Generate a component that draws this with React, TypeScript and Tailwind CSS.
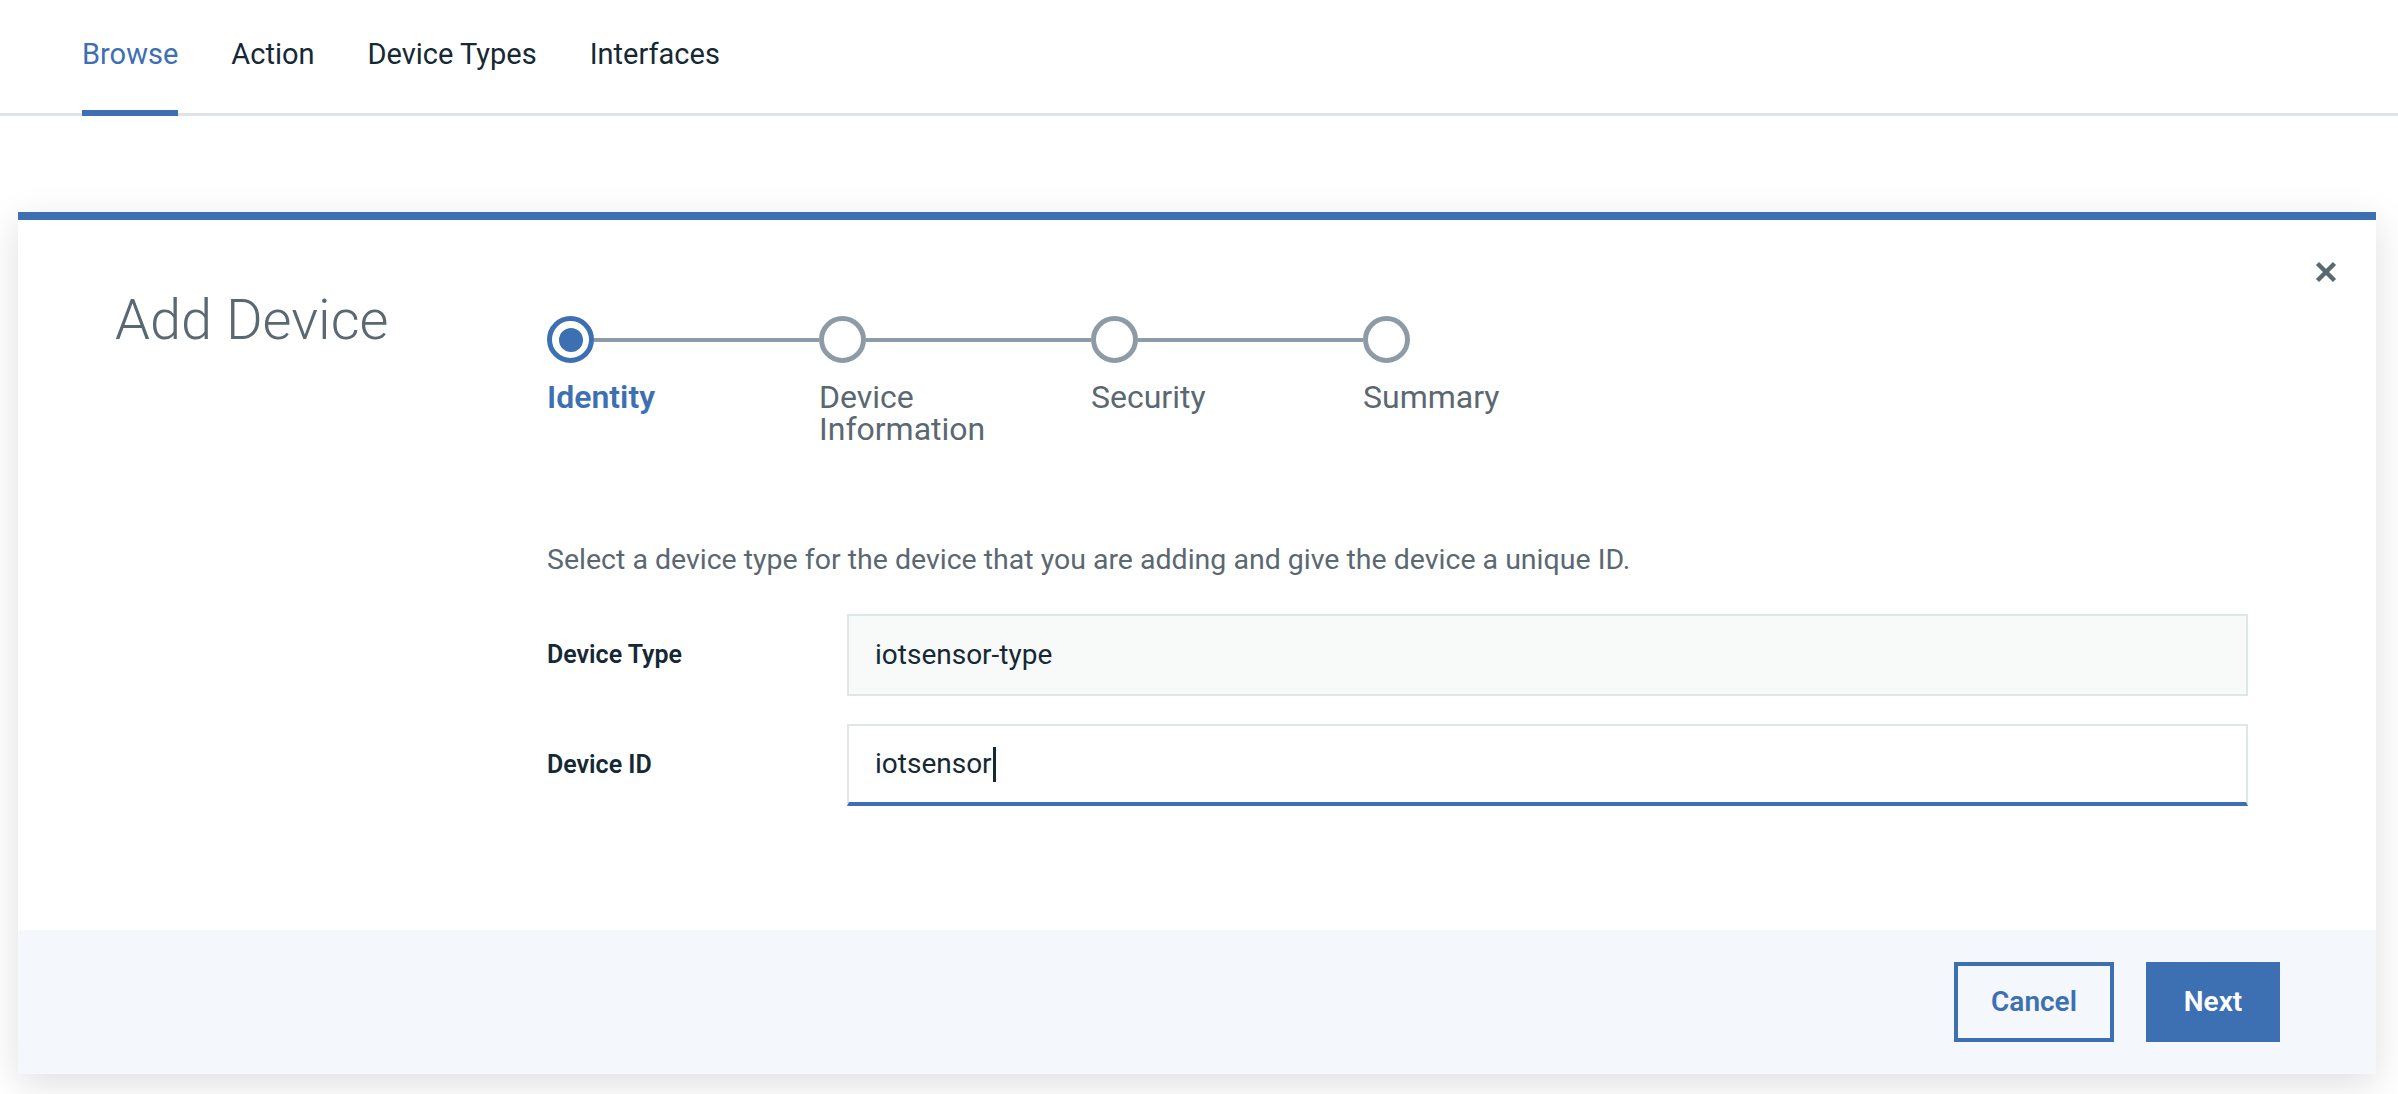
export default function App() {
  const tabs = ["Browse", "Action", "Device Types", "Interfaces"];
  const steps = [
    { label: "Identity", active: true },
    { label: "Device\nInformation", active: false },
    { label: "Security", active: false },
    { label: "Summary", active: false },
  ];

  return (
    <div className="min-h-screen bg-white font-[Roboto,'Liberation_Sans',sans-serif]">
      {/* top tabs */}
      <nav className="flex gap-[53px] pl-[82px] border-b-[3px] border-[#dfe3e6]">
        {tabs.map((t, i) => (
          <a
            key={t}
            className={
              "-mb-[3px] flex h-[116px] items-center border-b-[6px] pb-[1px] text-[29px] " +
              (i === 0 ? "border-[#3d70b2] text-[#3d70b2]" : "border-transparent text-[#152935]")
            }
          >
            {t}
          </a>
        ))}
      </nav>

      {/* add device modal */}
      <div className="relative mt-[96px] ml-[18px] mr-[22px] border-t-[8px] border-[#3d70b2] bg-white shadow-[0_10px_36px_rgba(0,0,0,0.13)]">
        <button className="absolute top-[41px] right-[39px] text-[#5a6872]">
          <svg width="22" height="22" viewBox="0 0 22 22">
            <path d="M2.5 2.5 L19.5 19.5 M19.5 2.5 L2.5 19.5" stroke="currentColor" strokeWidth="4.5" />
          </svg>
        </button>

        <div className="flex pl-[97px] pr-[128px] pb-[124px]">
          <h1 className="mt-[67px] w-[432px] shrink-0 text-[56px] font-light leading-[1.2] text-[#5a6872]">
            Add Device
          </h1>

          <div className="flex-1 pt-[96px]">
            {/* progress */}
            <div className="flex">
              {steps.map((s, i) => (
                <div key={i} className={i < steps.length - 1 ? "w-[272px]" : ""}>
                  <div className="flex items-center">
                    <div
                      className={
                        "flex h-[47px] w-[47px] shrink-0 items-center justify-center rounded-full border-[5px] bg-white " +
                        (s.active ? "border-[#3d70b2]" : "border-[#8c9ba5]")
                      }
                    >
                      {s.active && <div className="h-[24px] w-[24px] rounded-full bg-[#3d70b2]" />}
                    </div>
                    {i < steps.length - 1 && <div className="h-[4px] flex-1 bg-[#8c9ba5]" />}
                  </div>
                  <p
                    className={
                      "mt-[18px] whitespace-pre-line text-[32px] leading-[32px] " +
                      (s.active ? "font-semibold text-[#3d70b2]" : "text-[#5a6872]")
                    }
                  >
                    {s.label}
                  </p>
                </div>
              ))}
            </div>

            <p className="mt-[95px] text-[28.5px] leading-[40px] text-[#5a6872]">
              Select a device type for the device that you are adding and give the device a unique ID.
            </p>

            {/* form */}
            <div className="mt-[34px] flex flex-col gap-[28px]">
              <div className="flex items-center">
                <label className="w-[300px] shrink-0 text-[25px] font-semibold text-[#152935]">Device Type</label>
                <div className="flex h-[82px] flex-1 items-center border-2 border-[#dfe6e8] bg-[#f8fafa] px-[26px] text-[28px] text-[#152935]">
                  iotsensor-type
                </div>
              </div>
              <div className="flex items-center">
                <label className="w-[300px] shrink-0 text-[25px] font-semibold text-[#152935]">Device ID</label>
                <div className="flex h-[82px] flex-1 items-center border-2 border-b-[4px] border-[#dfe6e8] border-b-[#3d70b2] bg-white px-[26px] text-[28px] text-[#152935]">
                  iotsensor
                  <span className="ml-[1px] h-[35px] w-[3px] bg-[#152935]" />
                </div>
              </div>
            </div>
          </div>
        </div>

        {/* footer */}
        <div className="flex justify-end gap-[32px] bg-[#f4f7fb] py-[32px] pr-[96px]">
          <button className="h-[80px] w-[160px] border-[4px] border-[#3d70b2] text-[28px] font-semibold text-[#3d70b2]">
            Cancel
          </button>
          <button className="h-[80px] w-[134px] bg-[#3d70b2] text-[28px] font-semibold text-white">Next</button>
        </div>
      </div>
    </div>
  );
}
